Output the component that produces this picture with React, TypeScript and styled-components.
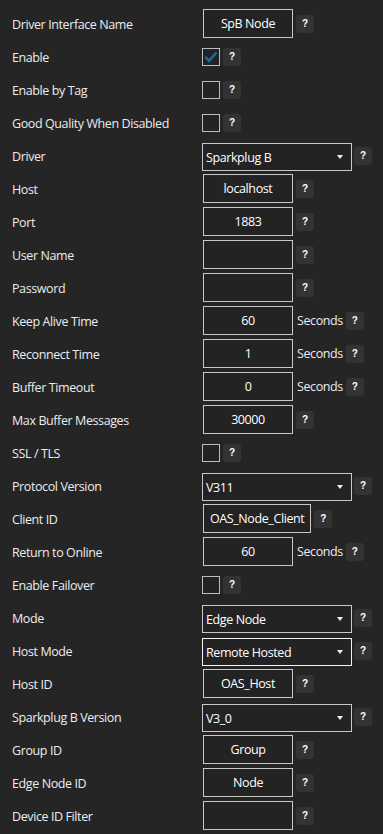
import React from "react";
import styled, { createGlobalStyle } from "styled-components";

const Global = createGlobalStyle`
  html, body { margin: 0; padding: 0; background: #252526; }
  body { font-family: "Open Sans", "Noto Sans", sans-serif; }
  * { box-sizing: border-box; }
`;

const Page = styled.div`
  width: 383px;
  min-height: 834px;
  background: #252526;
  padding-top: 7px;
  display: flex;
  flex-direction: column;
`;

const Row = styled.div`
  display: flex;
  align-items: center;
  height: 33px;
  padding-left: 12px;
`;

const Label = styled.div`
  width: 190px;
  flex: none;
  color: #ececec;
  font-size: 12.5px;
  letter-spacing: -0.4px;
  padding-top: 1px;
  white-space: nowrap;
`;

const TextBox = styled.div<{ $auto?: boolean }>`
  margin-left: 1px;
  height: 29px;
  ${(p) => (p.$auto ? "padding: 0 6px;" : "width: 90px;")}
  border: 1px solid #c8c8c8;
  background: #232323;
  color: #ffffff;
  font-size: 12.5px;
  letter-spacing: -0.4px;
  display: flex;
  align-items: center;
  justify-content: center;
  white-space: nowrap;
`;

const Select = styled.div<{ $focus?: boolean }>`
  width: 150px;
  height: 28px;
  margin-top: 3px;
  border: 1px solid ${(p) => (p.$focus ? "#f4f4f4" : "#c8c8c8")};
  background: #232323;
  color: #ffffff;
  font-size: 12.5px;
  letter-spacing: -0.4px;
  display: flex;
  align-items: center;
  padding: 0 8px 0 3px;
  justify-content: space-between;
`;

const Caret = styled.span`
  width: 0;
  height: 0;
  border-left: 3.5px solid transparent;
  border-right: 3.5px solid transparent;
  border-top: 4px solid #f0f0f0;
`;

const Check = styled.div`
  width: 18px;
  height: 18px;
  border: 1px solid #bdbdbd;
  background: #232323;
  display: flex;
  align-items: center;
  justify-content: center;
`;

const Help = styled.div<{ $gap: number }>`
  margin-left: ${(p) => p.$gap}px;
  width: 18px;
  height: 18px;
  border-radius: 3px;
  background: #333334;
  color: #ffffff;
  font-family: "Liberation Sans", Arial, sans-serif;
  font-weight: bold;
  font-size: 10px;
  display: flex;
  align-items: center;
  justify-content: center;
`;

const Unit = styled.span`
  margin-left: 4px;
  color: #ececec;
  font-size: 12.5px;
  letter-spacing: -0.4px;
`;

type Field =
  | { kind: "text"; label: string; value?: string; unit?: string; auto?: boolean }
  | { kind: "check"; label: string; checked?: boolean }
  | { kind: "select"; label: string; value: string; focus?: boolean };

const fields: Field[] = [
  { kind: "text", label: "Driver Interface Name", value: "SpB Node" },
  { kind: "check", label: "Enable", checked: true },
  { kind: "check", label: "Enable by Tag" },
  { kind: "check", label: "Good Quality When Disabled" },
  { kind: "select", label: "Driver", value: "Sparkplug B" },
  { kind: "text", label: "Host", value: "localhost" },
  { kind: "text", label: "Port", value: "1883" },
  { kind: "text", label: "User Name" },
  { kind: "text", label: "Password" },
  { kind: "text", label: "Keep Alive Time", value: "60", unit: "Seconds" },
  { kind: "text", label: "Reconnect Time", value: "1", unit: "Seconds" },
  { kind: "text", label: "Buffer Timeout", value: "0", unit: "Seconds" },
  { kind: "text", label: "Max Buffer Messages", value: "30000" },
  { kind: "check", label: "SSL / TLS" },
  { kind: "select", label: "Protocol Version", value: "V311" },
  { kind: "text", label: "Client ID", value: "OAS_Node_Client", auto: true },
  { kind: "text", label: "Return to Online", value: "60", unit: "Seconds" },
  { kind: "check", label: "Enable Failover" },
  { kind: "select", label: "Mode", value: "Edge Node" },
  { kind: "select", label: "Host Mode", value: "Remote Hosted", focus: true },
  { kind: "text", label: "Host ID", value: "OAS_Host" },
  { kind: "select", label: "Sparkplug B Version", value: "V3_0" },
  { kind: "text", label: "Group ID", value: "Group" },
  { kind: "text", label: "Edge Node ID", value: "Node" },
  { kind: "text", label: "Device ID Filter" },
];

const CheckMark = () => (
  <svg width="14" height="12" viewBox="0 0 14 12">
    <path d="M1.5 6 L5 9.8 L12.5 1.5" fill="none" stroke="#176ba3" strokeWidth="2.6" strokeLinecap="butt" strokeLinejoin="miter" />
  </svg>
);

export default function App() {
  return (
    <>
      <Global />
      <Page>
        {fields.map((f) => (
          <Row key={f.label}>
            <Label>{f.label}</Label>
            {f.kind === "text" && (
              <>
                <TextBox $auto={f.auto}>{f.value ?? ""}</TextBox>
                {f.unit && <Unit>{f.unit}</Unit>}
                <Help $gap={3}>?</Help>
              </>
            )}
            {f.kind === "check" && (
              <>
                <Check>{f.checked && <CheckMark />}</Check>
                <Help $gap={3}>?</Help>
              </>
            )}
            {f.kind === "select" && (
              <>
                <Select $focus={f.focus}>
                  <span>{f.value}</span>
                  <Caret />
                </Select>
                <Help $gap={2}>?</Help>
              </>
            )}
          </Row>
        ))}
      </Page>
    </>
  );
}
